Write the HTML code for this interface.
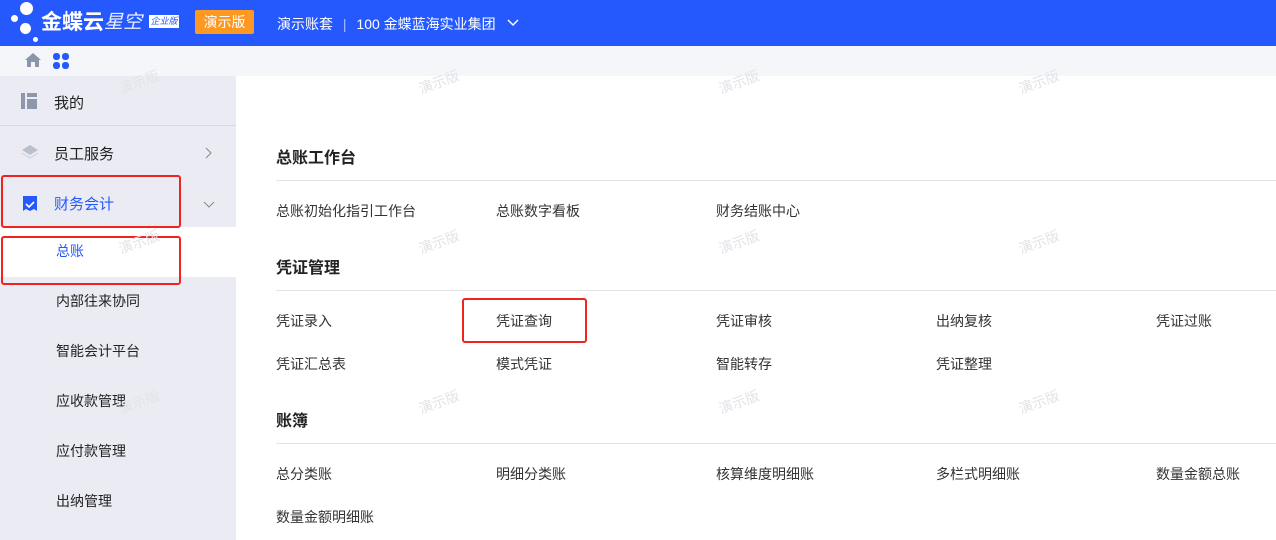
<!DOCTYPE html>
<html><head><meta charset="utf-8"><style>
*{margin:0;padding:0;box-sizing:border-box}
body{width:1276px;height:540px;overflow:hidden;background:#fff;font-family:"Liberation Sans","Noto Sans CJK SC",sans-serif;position:relative;color:#1e1e1e}
.hd{position:absolute;left:0;top:0;width:1276px;height:46px;background:#2559fe;color:#fff}
.ab{position:absolute}
.bar{position:absolute;left:0;top:46px;width:1276px;height:30px;background:#f5f6fa}
.side{position:absolute;left:0;top:76px;width:236px;height:464px;background:#ebebf4}
.it{position:absolute;left:0;width:236px;font-size:15px}
.sub{position:absolute;left:56px;font-size:14px;color:#222;line-height:16px}
.sec{position:absolute;left:276px;font-size:16px;font-weight:bold;color:#222;line-height:18px}
.ln{position:absolute;left:276px;width:1000px;height:1px;background:#e3e3e3}
.lk{position:absolute;font-size:14px;color:#333;line-height:16px}
.red{position:absolute;border:2px solid #f0231e;border-radius:3px}
.wm{position:absolute;font-size:14px;color:#e3e3e8;transform:rotate(-20deg)}
</style></head><body>
<div class="hd">
<div class="ab" style="left:20px;top:2px;width:13px;height:13px;border-radius:50%;background:#fff"></div>
<div class="ab" style="left:11px;top:15px;width:7px;height:7px;border-radius:50%;background:#fff"></div>
<div class="ab" style="left:20px;top:23px;width:11px;height:11px;border-radius:50%;background:#fff"></div>
<div class="ab" style="left:33px;top:37px;width:5px;height:5px;border-radius:50%;background:#fff"></div>
<div class="ab" style="left:41px;top:10px;font-size:21px;font-weight:bold;line-height:26px">金蝶云</div>
<div class="ab" style="left:104px;top:10px;font-size:19px;font-style:italic;opacity:.9;line-height:26px">星空</div>
<div class="ab" style="left:149px;top:15px;width:30px;height:13px;background:#fff;color:#2559fe;font-size:9px;line-height:13px;text-align:center;font-style:italic">企业版</div>
<div class="ab" style="left:195px;top:10px;width:59px;height:24px;background:#fd9822;border-radius:2px;font-size:14px;line-height:24px;text-align:center">演示版</div>
<div class="ab" style="left:277px;top:14px;font-size:14px">演示账套 <span style="opacity:.6;margin:0 6px">|</span> 100 金蝶蓝海实业集团</div>
<svg class="ab" style="left:506px;top:18px" width="14" height="10"><path d="M2 2l5 5 5-5" stroke="#fff" stroke-width="1.5" fill="none"/></svg>
</div>
<div class="bar">
<svg class="ab" style="left:24px;top:6px" width="18" height="16"><path d="M9 1L1 8h2v7h4v-5h4v5h4V8h2z" fill="#8a95a8"/></svg>
<svg class="ab" style="left:52px;top:6px" width="18" height="18"><rect x="1" y="1" width="7" height="7" rx="3" fill="#2559fe"/><rect x="10" y="1" width="7" height="7" rx="3" fill="#2559fe"/><rect x="1" y="10" width="7" height="7" rx="3" fill="#2559fe"/><rect x="10" y="10" width="7" height="7" rx="3" fill="#2559fe"/></svg>
</div>
<div class="side">
<div class="it" style="top:0;height:50px;border-bottom:1px solid #d9d9e2">
<svg class="ab" style="left:21px;top:17px" width="16" height="16"><rect x="0" y="0" width="4" height="16" fill="#8e98ad"/><rect x="6" y="0" width="10" height="4" fill="#8e98ad"/><rect x="6" y="6" width="10" height="10" fill="#8e98ad"/></svg>
<span class="ab" style="left:54px;top:16px">我的</span></div>
<div class="it" style="top:51px;height:50px">
<svg class="ab" style="left:21px;top:17px" width="18" height="16"><path d="M9 1l8 5-8 5-8-5z" fill="#b9bfcc"/><path d="M1 9l8 5 8-5" stroke="#c9ced8" fill="none"/></svg>
<span class="ab" style="left:54px;top:16px">员工服务</span>
<svg class="ab" style="left:205px;top:20px" width="8" height="12"><path d="M1 1l5 5-5 5" stroke="#888" fill="none"/></svg></div>
<div class="it" style="top:101px;height:50px">
<svg class="ab" style="left:23px;top:19px" width="14" height="15"><path d="M0 0h14v15l-3-2-4 2-4-2-3 2z" fill="#2559fe"/><path d="M3 8l3 3 5-5" stroke="#fff" stroke-width="1.6" fill="none"/></svg>
<span class="ab" style="left:54px;top:16px;color:#2559fe">财务会计</span>
<svg class="ab" style="left:203px;top:24px" width="12" height="8"><path d="M1 1l5 5 5-5" stroke="#888" fill="none"/></svg></div>
<div class="ab" style="left:0;top:151px;width:236px;height:50px;background:#fff"></div>
<div class="sub" style="top:167px;color:#2559fe">总账</div>
<div class="sub" style="top:217px">内部往来协同</div>
<div class="sub" style="top:267px">智能会计平台</div>
<div class="sub" style="top:317px">应收款管理</div>
<div class="sub" style="top:367px">应付款管理</div>
<div class="sub" style="top:417px">出纳管理</div>
</div>
<div class="red" style="left:1px;top:175px;width:180px;height:53px"></div>
<div class="red" style="left:1px;top:236px;width:180px;height:49px"></div>
<div class="sec" style="top:150px">总账工作台</div><div class="ln" style="top:180px"></div>
<div class="lk" style="left:276px;top:203px">总账初始化指引工作台</div>
<div class="lk" style="left:496px;top:203px">总账数字看板</div>
<div class="lk" style="left:716px;top:203px">财务结账中心</div>
<div class="sec" style="top:260px">凭证管理</div><div class="ln" style="top:290px"></div>
<div class="lk" style="left:276px;top:313px">凭证录入</div>
<div class="lk" style="left:496px;top:313px">凭证查询</div>
<div class="lk" style="left:716px;top:313px">凭证审核</div>
<div class="lk" style="left:936px;top:313px">出纳复核</div>
<div class="lk" style="left:1156px;top:313px">凭证过账</div>
<div class="lk" style="left:276px;top:356px">凭证汇总表</div>
<div class="lk" style="left:496px;top:356px">模式凭证</div>
<div class="lk" style="left:716px;top:356px">智能转存</div>
<div class="lk" style="left:936px;top:356px">凭证整理</div>
<div class="red" style="left:462px;top:298px;width:125px;height:45px"></div>
<div class="sec" style="top:413px">账簿</div><div class="ln" style="top:443px"></div>
<div class="lk" style="left:276px;top:466px">总分类账</div>
<div class="lk" style="left:496px;top:466px">明细分类账</div>
<div class="lk" style="left:716px;top:466px">核算维度明细账</div>
<div class="lk" style="left:936px;top:466px">多栏式明细账</div>
<div class="lk" style="left:1156px;top:466px">数量金额总账</div>
<div class="lk" style="left:276px;top:509px">数量金额明细账</div>
<div class="wm" style="left:118px;top:72px">演示版</div><div class="wm" style="left:418px;top:72px">演示版</div><div class="wm" style="left:718px;top:72px">演示版</div><div class="wm" style="left:1018px;top:72px">演示版</div>
<div class="wm" style="left:118px;top:232px">演示版</div><div class="wm" style="left:418px;top:232px">演示版</div><div class="wm" style="left:718px;top:232px">演示版</div><div class="wm" style="left:1018px;top:232px">演示版</div>
<div class="wm" style="left:118px;top:392px">演示版</div><div class="wm" style="left:418px;top:392px">演示版</div><div class="wm" style="left:718px;top:392px">演示版</div><div class="wm" style="left:1018px;top:392px">演示版</div>
</body></html>
